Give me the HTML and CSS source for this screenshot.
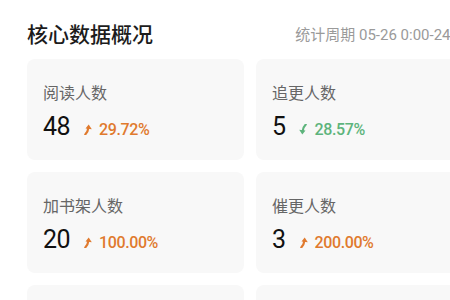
FILE: index.html
```html
<!DOCTYPE html>
<html lang="zh-CN">
<head>
    <meta charset="UTF-8" />
    <meta name="viewport" content="width=device-width, initial-scale=1" />
    <title>核心数据概况</title>
    <link rel="stylesheet" href="styles.css">
</head>
<body>
    <div class="page">
        <div class="header">
            <h2 class="title">核心数据概况</h2>
            <span class="period">统计周期 05-26 0:00-24:00</span>
        </div>
        <div class="cards">
            <div class="card">
                <div class="label">阅读人数</div>
                <div class="value-row">
                    <span class="value">48</span>
                    <span class="trend up">
                        <svg class="arrow" viewBox="0 0 10 12"><path d="M2.5 11.5 C4.5 9.5 5.6 7.5 5.9 4.5" /><polygon points="6.3,0.5 9.8,5.6 2.8,5" /></svg>
                        29.72%
                    </span>
                </div>
            </div>
            <div class="card">
                <div class="label">追更人数</div>
                <div class="value-row">
                    <span class="value">5</span>
                    <span class="trend down">
                        <svg class="arrow" viewBox="0 0 10 12"><path d="M2.5 11.5 C4.5 9.5 5.6 7.5 5.9 4.5" /><polygon points="6.3,0.5 9.8,5.6 2.8,5" /></svg>
                        28.57%
                    </span>
                </div>
            </div>
            <div class="card">
                <div class="label">加书架人数</div>
                <div class="value-row">
                    <span class="value">20</span>
                    <span class="trend up">
                        <svg class="arrow" viewBox="0 0 10 12"><path d="M2.5 11.5 C4.5 9.5 5.6 7.5 5.9 4.5" /><polygon points="6.3,0.5 9.8,5.6 2.8,5" /></svg>
                        100.00%
                    </span>
                </div>
            </div>
            <div class="card">
                <div class="label">催更人数</div>
                <div class="value-row">
                    <span class="value">3</span>
                    <span class="trend up">
                        <svg class="arrow" viewBox="0 0 10 12"><path d="M2.5 11.5 C4.5 9.5 5.6 7.5 5.9 4.5" /><polygon points="6.3,0.5 9.8,5.6 2.8,5" /></svg>
                        200.00%
                    </span>
                </div>
            </div>
            <div class="card"></div>
            <div class="card"></div>
        </div>
    </div>
</body>
</html>
```

FILE: styles.css
```css
body {
    margin: 0;
    background-color: #fff;
    font-family: Roboto, "Noto Sans CJK SC", sans-serif;
    overflow: hidden;
}
.page {
    width: 446px;
    padding: 18px 27px 0;
}
.header {
    display: flex;
    align-items: center;
    justify-content: space-between;
    height: 30px;
    margin-bottom: 11px;
    white-space: nowrap;
}
.title {
    margin: 0;
    font-size: 21px;
    font-weight: 500;
    color: #1c1c1c;
    font-family: "Noto Sans CJK SC", sans-serif;
}
.period {
    font-size: 15px;
    color: #9a9a9a;
    margin-right: 2px;
}
.cards {
    display: grid;
    grid-template-columns: repeat(2, 1fr);
    gap: 12px;
}
.card {
    background-color: #f8f8f8;
    border-radius: 8px;
    height: 101px;
    box-sizing: border-box;
    padding: 22px 16px 0;
}
.label {
    font-family: "Noto Sans CJK SC", sans-serif;
    font-size: 16px;
    line-height: 22px;
    color: #666;
}
.value-row {
    display: flex;
    align-items: baseline;
    margin-top: 10px;
}
.value {
    font-size: 25px;
    line-height: 28px;
    color: #111;
    letter-spacing: -0.5px;
}
.trend {
    display: flex;
    align-items: center;
    gap: 7px;
    margin-left: 13px;
    font-size: 16px;
    font-weight: 500;
    letter-spacing: -0.4px;
}
.trend.up {
    color: #e07a2e;
}
.trend.down {
    color: #5db47c;
}
.arrow {
    width: 9px;
    height: 11px;
    fill: currentColor;
    stroke: currentColor;
}
.arrow path {
    fill: none;
    stroke-width: 2.4;
    stroke-linecap: round;
}
.arrow polygon {
    stroke: none;
}
.trend.down .arrow {
    transform: rotate(180deg);
}
```
